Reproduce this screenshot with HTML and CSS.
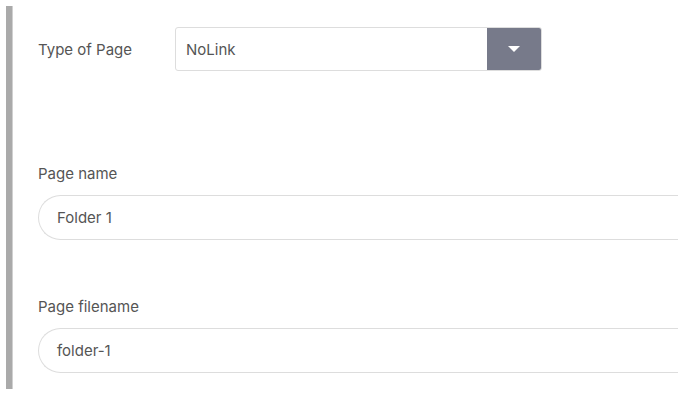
FILE: index.html
```html
<!DOCTYPE html>
<html>
<head>
<meta charset="utf-8">
<link rel="stylesheet" href="styles.css">
</head>
<body>
<div class="panel">
  <div class="row-type">
    <label class="type-label">Type of Page</label>
    <div class="select">
      <div class="select-value">NoLink</div>
      <div class="select-btn">
        <svg width="12" height="6" viewBox="0 0 12 6"><path d="M0 0 L12 0 L6 6 Z" fill="#fff"/></svg>
      </div>
    </div>
  </div>
  <div class="field field-name">
    <label class="field-label">Page name</label>
    <div class="input">Folder 1</div>
  </div>
  <div class="field field-file">
    <label class="field-label">Page filename</label>
    <div class="input">folder-1</div>
  </div>
</div>
</body>
</html>
```

FILE: styles.css
```css
html, body {
  margin: 0;
  padding: 0;
  background: #fff;
}
body {
  font-family: Inter, "Noto Sans", sans-serif;
  color: #555;
  font-size: 15px;
}
.panel {
  margin: 6px 0 0 6px;
  height: 383px;
  border-left: 6px solid #aaa;
  box-shadow: inset 1px 0 0 #d0d0d0;
  padding-left: 26px;
  box-sizing: border-box;
  width: 672px;
  padding-top: 21px;
}
.row-type {
  display: flex;
  align-items: center;
}
.type-label {
  width: 137px;
  font-size: 15px;
}
.select {
  display: flex;
  width: 367px;
  height: 44px;
  border: 1px solid #ddd;
  border-radius: 3px;
  box-sizing: border-box;
  overflow: hidden;
}
.select-value {
  flex: 1;
  padding-left: 10px;
  display: flex;
  align-items: center;
  font-size: 15px;
  color: #555;
}
.select-btn {
  width: 54px;
  background: #777a8a;
  display: flex;
  align-items: center;
  justify-content: center;
}
.field {
  display: flex;
  flex-direction: column;
}
.field-name {
  margin-top: 94px;
}
.field-file {
  margin-top: 58px;
}
.field-label {
  font-size: 15px;
  line-height: 18px;
  margin-bottom: 12px;
}
.input {
  height: 45px;
  border: 1px solid #ddd;
  border-right: none;
  border-radius: 23px 0 0 23px;
  box-sizing: border-box;
  padding-left: 18px;
  display: flex;
  align-items: center;
  font-size: 15px;
  color: #555;
}
```
